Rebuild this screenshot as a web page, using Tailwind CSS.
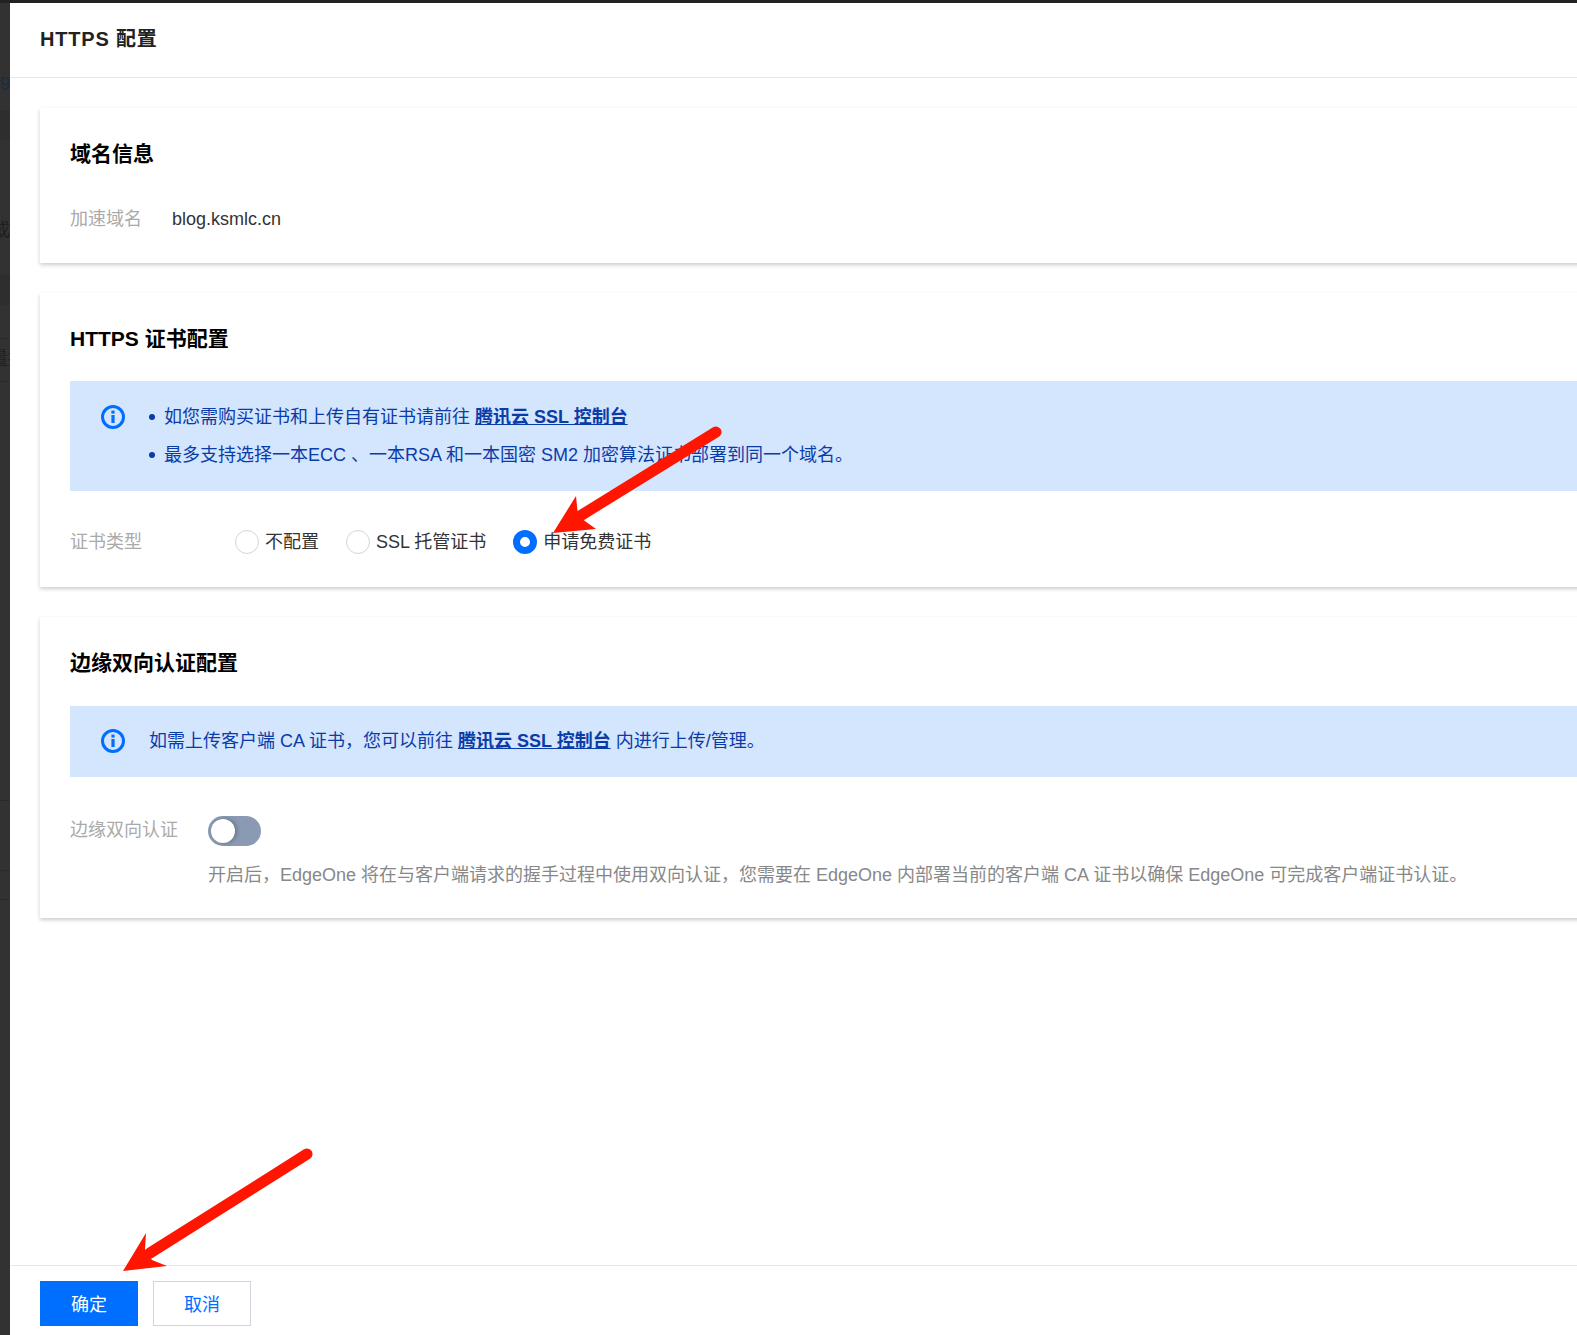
<!DOCTYPE html>
<html lang="zh-CN">
<head>
    <meta charset="UTF-8">
    <meta name="viewport" content="width=device-width, initial-scale=1.0">
    <title>HTTPS 配置</title>
    <script src="https://cdn.jsdelivr.net/npm/@tailwindcss/browser@4"></script>
</head>
<body class="bg-[#323232] font-['Liberation_Sans','Noto_Sans_CJK_SC',sans-serif] text-[18px] text-[#333]">
    <div class="relative w-[1577px] h-[1335px] overflow-hidden flex flex-col">
        <!-- Top strip -->
        <div class="h-[3px] bg-[#222] shrink-0"></div>

        <div class="flex flex-1 min-h-0">
            <!-- Page behind the drawer -->
            <div class="w-[10px] shrink-0 overflow-hidden text-[#1e1e1e] text-[18px] leading-[24px] whitespace-nowrap">
                <div class="h-[107px] pt-[69px] text-[#1c2c40]">93</div>
                <div class="h-[30px] bg-[#2e2e2e]"></div>
                <div class="h-[135px] pt-[78px] -ml-[8px] w-[40px]">或</div>
                <div class="h-[30px] bg-[#2e2e2e]"></div>
                <div class="h-[33px]"></div>
                <div class="h-[44px] pt-[8px] -ml-[10px] w-[40px] border-y border-[#2a2a2a]">量担</div>
                <div class="h-[418px]"></div>
                <div class="h-[70px] border-t border-[#2a2a2a]"></div>
                <div class="h-[30px] border-y border-[#2a2a2a]"></div>
            </div>

            <!-- Drawer -->
            <div class="w-[1567px] bg-white flex flex-col">
                <div class="h-[75px] shrink-0 border-b border-[#e8e8e8] pl-[30px] pb-[2px] flex items-center">
                    <h1 class="font-bold text-[20px] tracking-[0.8px] text-[#222]">HTTPS 配置</h1>
                </div>

                <div class="flex-1 pl-[30px] pt-[30px] flex flex-col gap-[30px] overflow-hidden">
                    <!-- 域名信息 -->
                    <section class="w-[1600px] h-[155px] bg-white shadow-[0_2px_4px_rgba(0,0,0,0.2)] px-[30px] pt-[31px]">
                        <h2 class="font-bold text-[21px] leading-[30px] text-black">域名信息</h2>
                        <div class="flex mt-[37px] leading-[26px]">
                            <span class="w-[102px] text-[#aaa]">加速域名</span>
                            <span>blog.ksmlc.cn</span>
                        </div>
                    </section>

                    <!-- HTTPS 证书配置 -->
                    <section class="w-[1600px] h-[294px] bg-white shadow-[0_2px_4px_rgba(0,0,0,0.2)] pl-[30px] pt-[31px]">
                        <h2 class="font-bold text-[21px] leading-[30px] text-black">HTTPS 证书配置</h2>
                        <div class="mt-[27px] h-[110px] bg-[#d4e5fe] flex text-[#0a3ca8] pl-[31px] pt-[23px]">
                            <svg class="w-[24px] h-[24px] mt-[1px] shrink-0" viewBox="0 0 24 24" fill="none">
                                <circle cx="12" cy="12" r="10.5" stroke="#006eff" stroke-width="3"/>
                                <rect x="10.4" y="10" width="3.2" height="8" fill="#006eff"/>
                                <rect x="10.4" y="5.6" width="3.2" height="3" fill="#006eff"/>
                            </svg>
                            <ul class="ml-[24px] flex flex-col gap-[12px] leading-[26px]">
                                <li class="flex items-center"><span class="w-[6px] h-[6px] rounded-full bg-[#0a3ca8] mr-[9px]"></span>如您需购买证书和上传自有证书请前往&nbsp;<a class="font-bold underline text-[#0a3ca8]">腾讯云 SSL 控制台</a></li>
                                <li class="flex items-center"><span class="w-[6px] h-[6px] rounded-full bg-[#0a3ca8] mr-[9px]"></span>最多支持选择一本ECC 、一本RSA 和一本国密 SM2 加密算法证书部署到同一个域名。</li>
                            </ul>
                        </div>
                        <div class="flex items-center mt-[38px] leading-[26px]">
                            <span class="w-[165px] text-[#aaa]">证书类型</span>
                            <span class="w-[24px] h-[24px] rounded-full border border-[#d0d5dd] bg-white mr-[6px]"></span>
                            <span class="mr-[27px]">不配置</span>
                            <span class="w-[24px] h-[24px] rounded-full border border-[#d0d5dd] bg-white mr-[6px]"></span>
                            <span class="mr-[27px]">SSL 托管证书</span>
                            <span class="w-[24px] h-[24px] rounded-full border-[7px] border-[#006eff] bg-white mr-[6px]"></span>
                            <span>申请免费证书</span>
                        </div>
                    </section>

                    <!-- 边缘双向认证配置 -->
                    <section class="w-[1600px] h-[301px] bg-white shadow-[0_2px_4px_rgba(0,0,0,0.2)] pl-[30px] pt-[31px]">
                        <h2 class="font-bold text-[21px] leading-[30px] text-black">边缘双向认证配置</h2>
                        <div class="mt-[28px] h-[71px] bg-[#d4e5fe] flex items-center text-[#0a3ca8] pl-[31px]">
                            <svg class="w-[24px] h-[24px] mb-[2px] shrink-0" viewBox="0 0 24 24" fill="none">
                                <circle cx="12" cy="12" r="10.5" stroke="#006eff" stroke-width="3"/>
                                <rect x="10.4" y="10" width="3.2" height="8" fill="#006eff"/>
                                <rect x="10.4" y="5.6" width="3.2" height="3" fill="#006eff"/>
                            </svg>
                            <p class="ml-[24px]">如需上传客户端 CA 证书，您可以前往&nbsp;<a class="font-bold underline">腾讯云 SSL 控制台</a>&nbsp;内进行上传/管理。</p>
                        </div>
                        <div class="flex mt-[39px]">
                            <span class="w-[138px] pt-[1px] text-[#aaa] leading-[26px]">边缘双向认证</span>
                            <div>
                                <div class="w-[53px] h-[30px] rounded-full bg-[#8a9ab2] flex items-center pl-[3px]">
                                    <span class="w-[24px] h-[24px] rounded-full bg-white shadow-[2px_0_4px_rgba(0,0,0,0.25)]"></span>
                                </div>
                                <p class="mt-[16px] text-[#888] leading-[26px]">开启后，EdgeOne 将在与客户端请求的握手过程中使用双向认证，您需要在 EdgeOne 内部署当前的客户端 CA 证书以确保 EdgeOne 可完成客户端证书认证。</p>
                            </div>
                        </div>
                    </section>
                </div>

                <!-- Footer -->
                <div class="h-[70px] shrink-0 border-t border-[#e8e8e8] pl-[30px] pt-[15px] flex gap-[15px]">
                    <button class="w-[98px] h-[45px] pt-[4px] bg-[#006eff] text-white">确定</button>
                    <button class="w-[98px] h-[45px] pt-[4px] bg-white border border-[#cfd5de] text-[#006eff]">取消</button>
                </div>
            </div>
        </div>

        <!-- Red annotation arrows -->
        <svg class="absolute left-0 top-0 pointer-events-none" width="1577" height="1335" viewBox="0 0 1577 1335">
            <line x1="716" y1="432" x2="580" y2="516" stroke="#ff1500" stroke-width="11" stroke-linecap="round"/>
            <polygon points="553,533 576,496 578,516 596,529" fill="#ff1500"/>
            <line x1="307" y1="1154" x2="150" y2="1253" stroke="#ff1500" stroke-width="11" stroke-linecap="round"/>
            <polygon points="123,1271 146,1233 145,1249 152,1260 167,1266" fill="#ff1500"/>
        </svg>
    </div>
</body>
</html>
